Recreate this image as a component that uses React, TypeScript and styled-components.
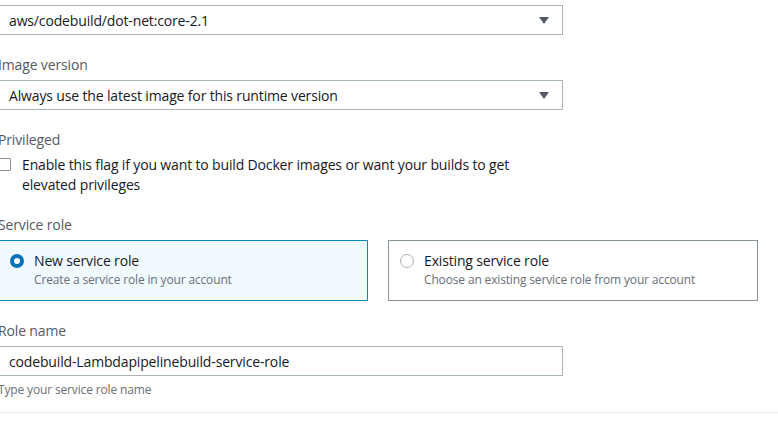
import React, { useState } from "react";
import styled, { createGlobalStyle } from "styled-components";

const GlobalStyle = createGlobalStyle`
  html, body {
    margin: 0;
    padding: 0;
    background: #ffffff;
    overflow: hidden;
  }
  body {
    font-family: "Open Sans", "Noto Sans", Arial, sans-serif;
    letter-spacing: -0.15px;
    color: #16191f;
  }
`;

const Page = styled.div`
  width: 780px;
  margin-left: -2px;
  padding-top: 5px;
  border-bottom: 1px solid #eaeded;
  padding-bottom: 13px;
`;

const Field = styled.div`
  display: flex;
  flex-direction: column;
  margin-bottom: 20px;
  &:last-child {
    margin-bottom: 0;
  }
`;

const Label = styled.div`
  font-size: 14px;
  line-height: 20px;
  color: #545b64;
  margin-bottom: 5px;
`;

const SelectBox = styled.div`
  width: 565px;
  height: 30px;
  box-sizing: border-box;
  border: 1px solid #aab7b8;
  display: flex;
  align-items: center;
  padding: 0 10px;
  font-size: 14px;
  color: #16191f;
`;

const Caret = styled.span`
  margin-left: auto;
  margin-right: 3px;
  width: 0;
  height: 0;
  border-left: 5px solid transparent;
  border-right: 5px solid transparent;
  border-top: 7px solid #545b64;
`;

const CheckRow = styled.label`
  display: flex;
  align-items: flex-start;
  gap: 11px;
  font-size: 14px;
  line-height: 20px;
  color: #16191f;
  width: 540px;
`;

const Box = styled.span`
  flex: none;
  width: 13px;
  height: 13px;
  margin-top: 3px;
  box-sizing: border-box;
  border: 1px solid #879596;
  border-radius: 1px;
  background: #fff;
`;

const Tiles = styled.div`
  display: grid;
  grid-template-columns: 370px 370px;
  gap: 20px;
`;

const Tile = styled.div<{ $selected: boolean }>`
  box-sizing: border-box;
  height: 61px;
  display: flex;
  align-items: flex-start;
  gap: 10px;
  padding: 10px 10px 0 11px;
  border: 1px solid ${({ $selected }) => ($selected ? "#0a8ab7" : "#879596")};
  background: ${({ $selected }) => ($selected ? "#f1faff" : "#ffffff")};
  cursor: pointer;
`;

const Radio = styled.span<{ $selected: boolean }>`
  flex: none;
  width: 14px;
  height: 14px;
  margin-top: 3px;
  box-sizing: border-box;
  border-radius: 50%;
  background: #fff;
  border: ${({ $selected }) =>
    $selected ? "4px solid #0073bb" : "1px solid #aab7b8"};
`;

const TileText = styled.div`
  display: flex;
  flex-direction: column;
`;

const TileTitle = styled.span`
  font-size: 14px;
  line-height: 20px;
  color: #16191f;
`;

const TileDesc = styled.span`
  font-size: 12px;
  line-height: 18px;
  color: #687078;
`;

const Input = styled.input`
  width: 565px;
  height: 30px;
  box-sizing: border-box;
  border: 1px solid #aab7b8;
  padding: 0 10px;
  font-family: inherit;
  letter-spacing: inherit;
  font-size: 14px;
  color: #16191f;
  outline: none;
`;

const Hint = styled.div`
  font-size: 12px;
  line-height: 18px;
  color: #687078;
  margin-top: 5px;
`;

const roles = [
  { id: "new", title: "New service role", desc: "Create a service role in your account" },
  { id: "existing", title: "Existing service role", desc: "Choose an existing service role from your account" },
];

export default function App() {
  const [role, setRole] = useState("new");
  const [name, setName] = useState("codebuild-Lambdapipelinebuild-service-role");

  return (
    <>
      <GlobalStyle />
      <Page>
        <Field>
          <SelectBox>
            aws/codebuild/dot-net:core-2.1
            <Caret />
          </SelectBox>
        </Field>
        <Field>
          <Label>Image version</Label>
          <SelectBox>
            Always use the latest image for this runtime version
            <Caret />
          </SelectBox>
        </Field>
        <Field>
          <Label>Privileged</Label>
          <CheckRow>
            <Box />
            <span>
              Enable this flag if you want to build Docker images or want your builds to get
              elevated privileges
            </span>
          </CheckRow>
        </Field>
        <Field>
          <Label>Service role</Label>
          <Tiles>
            {roles.map((r) => (
              <Tile key={r.id} $selected={role === r.id} onClick={() => setRole(r.id)}>
                <Radio $selected={role === r.id} />
                <TileText>
                  <TileTitle>{r.title}</TileTitle>
                  <TileDesc>{r.desc}</TileDesc>
                </TileText>
              </Tile>
            ))}
          </Tiles>
        </Field>
        <Field>
          <Label>Role name</Label>
          <Input value={name} onChange={(e) => setName(e.target.value)} />
          <Hint>Type your service role name</Hint>
        </Field>
      </Page>
    </>
  );
}
